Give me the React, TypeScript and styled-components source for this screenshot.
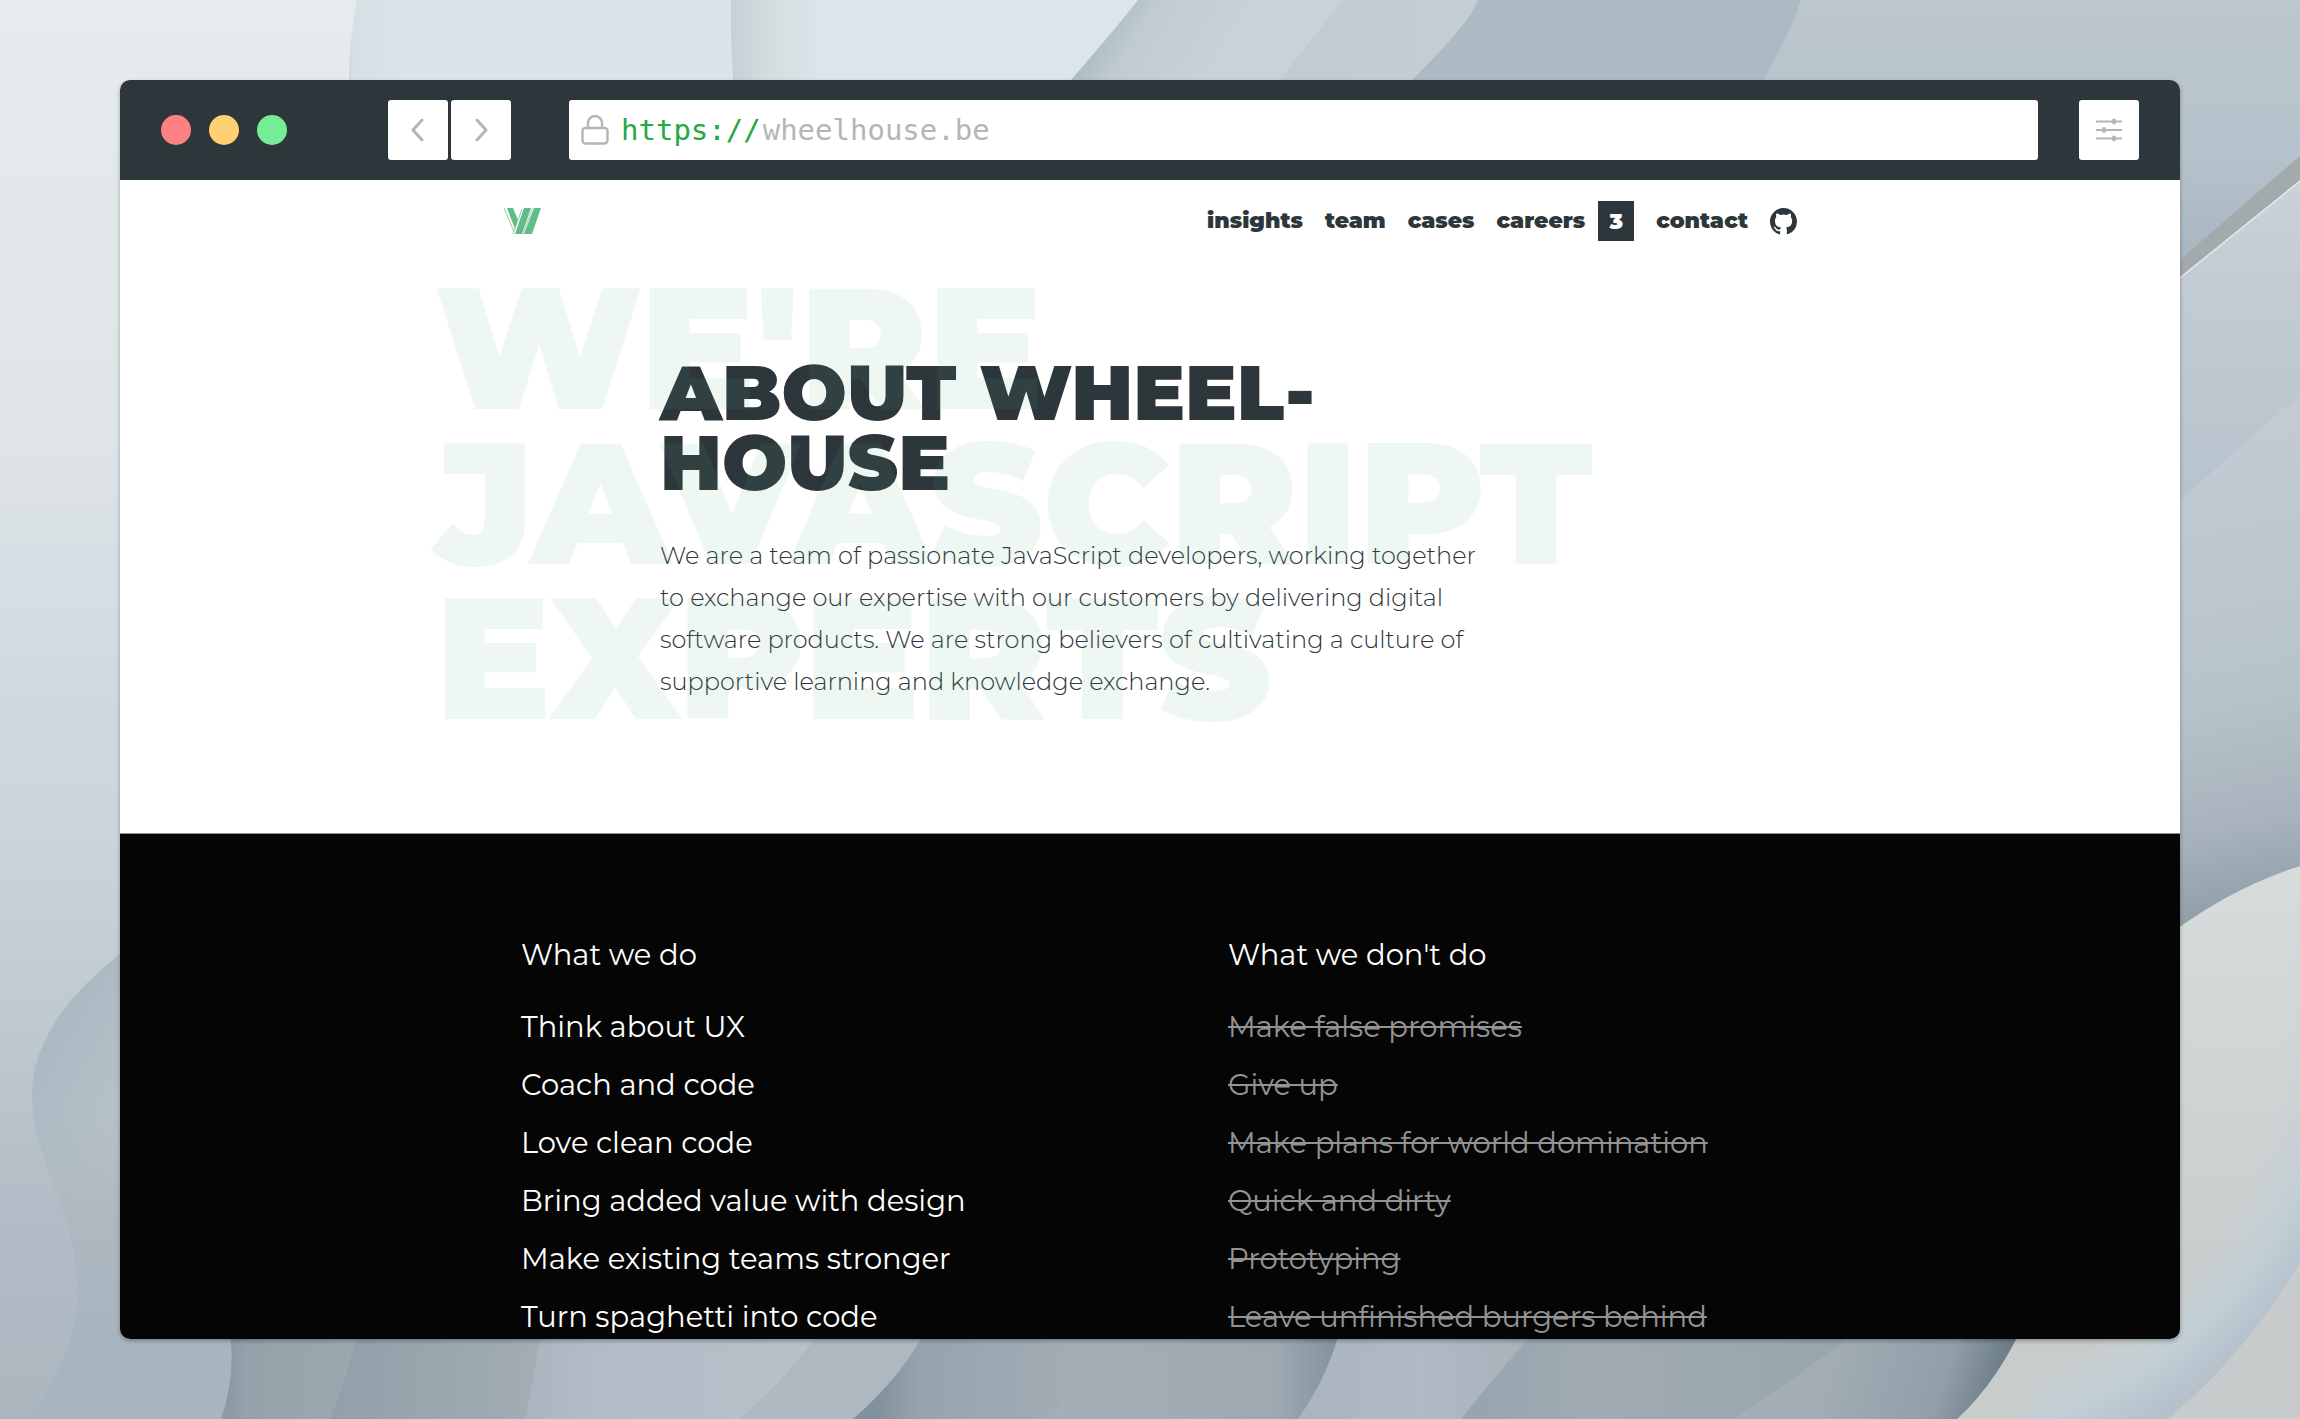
import React from "react";
import styled, { createGlobalStyle } from "styled-components";

const ink = "#2d363b";
const green = "#58ac7b";
const muted = "#b5b5b5";

const GlobalStyle = createGlobalStyle`
  *, *::before, *::after { box-sizing: border-box; }
  body { margin: 0; font-family: Montserrat, Inter, "Open Sans", sans-serif; color: ${ink}; }
  h1, h2, p, ul { margin: 0; padding: 0; font-weight: inherit; }
  ul { list-style: none; }
`;

const Desktop = styled.div`
  position: relative;
  display: flex;
  height: 100vh;
  padding: 80px 120px;
  overflow: hidden;
`;

const Wallpaper = styled.svg`
  position: absolute;
  inset: 0;
  width: 100%;
  height: 100%;
`;

const BrowserWindow = styled.div`
  position: relative;
  flex: 1;
  display: flex;
  flex-direction: column;
  min-width: 0;
  overflow: hidden;
  border-radius: 10px;
  background: #fff;
  box-shadow: 0 2px 4px rgba(0, 0, 0, 0.3);
`;

const Toolbar = styled.div`
  flex: none;
  display: flex;
  align-items: center;
  height: 100px;
  padding: 0 41px;
  background: ${ink};
`;

const Lights = styled.div`
  display: flex;
  gap: 18px;
  margin-right: 101px;
`;

const Light = styled.button<{ $color: string }>`
  width: 30px;
  height: 30px;
  padding: 0;
  border: 0;
  border-radius: 50%;
  background: ${(p) => p.$color};
`;

const History = styled.div`
  display: flex;
  gap: 3px;
  margin-right: 58px;
`;

const ToolButton = styled.button`
  display: grid;
  place-items: center;
  width: 60px;
  height: 60px;
  padding: 0;
  border: 0;
  border-radius: 3px;
  background: #fff;
  color: ${muted};
`;

const AddressBar = styled.label`
  flex: 1;
  display: flex;
  align-items: center;
  min-width: 0;
  height: 60px;
  margin-right: 41px;
  padding: 0 12px;
  border-radius: 3px;
  background: #fff;
  color: ${muted};
  font: 29px/60px "DejaVu Sans Mono", monospace;
`;

const Scheme = styled.span`
  margin-left: 12px;
  color: #28a745;
`;

const AddressInput = styled.input`
  flex: 1;
  min-width: 0;
  padding: 0 2px;
  border: 0;
  outline: 0;
  background: none;
  color: inherit;
  font: inherit;
`;

const Page = styled.div`
  flex: 1;
  display: flex;
  flex-direction: column;
  min-height: 0;
  overflow: hidden;
`;

const SiteHeader = styled.header`
  flex: none;
  display: flex;
  align-items: center;
  justify-content: space-between;
  width: 100%;
  max-width: 1300px;
  height: 82px;
  margin: 0 auto;
  padding: 0 3px;
`;

const HomeLink = styled.a`
  display: flex;
`;

const SiteNav = styled.nav`
  display: flex;
  align-items: center;
  gap: 22px;
`;

const NavLink = styled.a`
  display: flex;
  align-items: center;
  gap: 13px;
  color: ${ink};
  font-size: 22px;
  font-weight: 900;
  line-height: 40px;
  text-decoration: none;
`;

const Badge = styled.span`
  width: 36px;
  padding-top: 2px;
  background: ${ink};
  color: #fff;
  line-height: 38px;
  text-align: center;
`;

const Hero = styled.section`
  flex: none;
  display: grid;
  width: 100%;
  max-width: 1430px;
  height: 571px;
  margin: 0 auto;
`;

const Intro = styled.div`
  grid-area: 1 / 1;
  max-width: 1060px;
  padding: 95px 0 0 225px;
`;

const Title = styled.h1`
  font-size: 77px;
  font-weight: 900;
  line-height: 70px;
  text-transform: uppercase;
`;

const Lead = styled.p`
  margin-top: 38px;
  font-size: 24px;
  font-weight: 300;
  line-height: 42px;
`;

const Ghost = styled.p`
  grid-area: 1 / 1;
  z-index: 1;
  padding: 8px 0 0;
  color: ${green};
  font-size: 172px;
  font-weight: 900;
  line-height: 155px;
  text-transform: uppercase;
  opacity: 0.09;
  pointer-events: none;
`;

const Values = styled.section`
  flex: 1 0 auto;
  border-top: 1px solid #8e8e8e;
  background: #050505;
  color: #fff;
`;

const ValuesInner = styled.div`
  display: grid;
  grid-template-columns: 1fr 1fr;
  column-gap: 156px;
  max-width: 1258px;
  margin: 0 auto;
  padding-top: 92px;
`;

const ColumnTitle = styled.h2`
  margin-bottom: 14px;
  font-size: 29px;
  line-height: 58px;
`;

const Item = styled.li<{ $struck?: boolean }>`
  color: ${(p) => (p.$struck ? "#939393" : "#fff")};
  font-size: 29px;
  line-height: 58px;
  text-decoration: ${(p) => (p.$struck ? "line-through" : "none")};
`;

const doList = [
  "Think about UX",
  "Coach and code",
  "Love clean code",
  "Bring added value with design",
  "Make existing teams stronger",
  "Turn spaghetti into code",
];

const dontList = [
  "Make false promises",
  "Give up",
  "Make plans for world domination",
  "Quick and dirty",
  "Prototyping",
  "Leave unfinished burgers behind",
];

type Stop = [number, string];

function Gradient({ id, x1 = 0, y1 = 0, x2 = 0, y2 = 0, stops }: {
  id: string; x1?: number; y1?: number; x2?: number; y2?: number; stops: Stop[];
}) {
  return (
    <linearGradient id={id} gradientUnits="userSpaceOnUse" x1={x1} y1={y1} x2={x2} y2={y2}>
      {stops.map(([at, color]) => <stop key={at} offset={at} stopColor={color} />)}
    </linearGradient>
  );
}

function WallpaperArt() {
  return (
    <Wallpaper viewBox="0 0 2300 1419" preserveAspectRatio="none" aria-hidden="true">
      <defs>
        <Gradient id="base" y2={1419} stops={[[0, "#e6ebed"], [0.3, "#dfe5e8"], [0.5, "#d0d8df"], [0.58, "#ccd5dc"], [0.74, "#bcc7ce"], [0.86, "#b2bcc6"], [1, "#abb6bf"]]} />
        <Gradient id="t1" x1={348} x2={400} stops={[[0, "#c9d3d9"], [0.1, "#d6dfe4"], [1, "#dce4eb"]]} />
        <Gradient id="t2" x1={731} x2={820} stops={[[0, "#c6d0d7"], [0.5, "#d6dee0"], [1, "#dce4ec"]]} />
        <Gradient id="t3" x1={1092} y1={30} x2={1200} y2={95} stops={[[0, "#a9b8c2"], [0.35, "#c1ccd2"], [1, "#c9d1d9"]]} />
        <Gradient id="t4" x1={1300} x2={1480} stops={[[0, "#c0cbd4"], [1, "#c4ced2"]]} />
        <Gradient id="t5" x1={1400} x2={1800} stops={[[0, "#acbac3"], [1, "#abbac4"]]} />
        <Gradient id="t6" y2={250} stops={[[0, "#bbc6cd"], [0.6, "#b7c3cc"], [1, "#a8b7c2"]]} />
        <Gradient id="r1" y1={200} y2={490} stops={[[0, "#c8d0d8"], [0.5, "#bfc9d1"], [1, "#b7c3cd"]]} />
        <Gradient id="r2" x1={2200} y1={430} x2={2300} y2={910} stops={[[0, "#c2cbd3"], [0.55, "#b7c3ca"], [0.8, "#a8b3bd"], [1, "#8f9da6"]]} />
        <Gradient id="cream" y1={880} y2={1300} stops={[[0, "#d6dbdc"], [0.6, "#ced2d2"], [1, "#c8cccb"]]} />
        <radialGradient id="fold" gradientUnits="userSpaceOnUse" cx="1900" cy="1000" r="490">
          <stop offset="0.8" stopColor="#c5d1d6" stopOpacity="0" />
          <stop offset="0.9" stopColor="#c3cfd6" />
          <stop offset="1" stopColor="#b4c0ca" />
        </radialGradient>
        <Gradient id="wave" x1={35} y1={1050} x2={140} y2={1110} stops={[[0, "#acb8c2"], [0.5, "#b1bec6"], [1, "#b9c3ca"]]} />
        <Gradient id="waveLow" y1={1100} y2={1340} stops={[[0, "rgba(172,183,192,0)"], [0.5, "#adb8c1"], [1, "#a9b5be"]]} />
        <Gradient id="b1" x1={228} x2={350} stops={[[0, "#8b99a4"], [0.15, "#94a2aa"], [1, "#9ca8b0"]]} />
        <Gradient id="b2" x1={335} x2={540} stops={[[0, "#93a0a9"], [1, "#a2adb4"]]} />
        <Gradient id="b3" x1={530} x2={820} stops={[[0, "#aab5bf"], [0.2, "#b2bcc7"], [1, "#b8c1c9"]]} />
        <Gradient id="b5" x1={880} x2={1080} stops={[[0, "#82929c"], [0.2, "#98a4ad"], [1, "#a2adb6"]]} />
        <Gradient id="b6" x1={1060} x2={1330} stops={[[0, "#a4aeb7"], [0.8, "#9ea9b1"], [1, "#86959f"]]} />
        <Gradient id="b7" x1={1310} x2={1530} stops={[[0, "#aab5bf"], [0.5, "#b0bac4"], [1, "#a7b2bb"]]} />
        <Gradient id="b8" x1={1480} x2={1830} stops={[[0, "#98a5ae"], [0.3, "#a0abb3"], [1, "#9aa6ae"]]} />
        <Gradient id="b9" x1={1830} y1={1350} x2={1990} y2={1400} stops={[[0, "#a2adb5"], [0.7, "#929fa8"], [1, "#6e7f8a"]]} />
      </defs>
      <rect width="2300" height="1419" fill="url(#base)" />
      <path d="M357 0Q347 50 349 120H2300V0Z" fill="url(#t1)" />
      <path d="M731 0Q730 50 736 120H2300V0Z" fill="url(#t2)" />
      <path d="M1138 0Q1105 42 1036 120H2300V0Z" fill="url(#t3)" />
      <path d="M1343 0Q1310 40 1250 120H2300V0Z" fill="url(#t4)" />
      <path d="M1478 0Q1467 30 1380 110H2300V0Z" fill="url(#t5)" />
      <path d="M1801 0Q1788 42 1745 110V300H2300V0Z" fill="url(#t6)" />
      <path d="M2160 277L2300 156V190L2160 300Z" fill="#a2aaab" />
      <path d="M2160 294L2300 181V500H2160Z" fill="url(#r1)" />
      <path d="M2160 294L2300 181" stroke="#e4eaed" strokeWidth="1.5" />
      <path d="M2160 518L2300 394V1000H2160Z" fill="url(#r2)" />
      <path d="M130 946C62 997 32 1047 32 1095C32 1160 77 1210 77 1294C77 1345 52 1390 25 1419H260V946Z" fill="url(#wave)" />
      <path d="M130 946C62 997 32 1047 32 1095C32 1160 77 1210 77 1294C77 1345 52 1390 25 1419H260V946Z" fill="url(#waveLow)" />
      <path d="M228 1320Q238 1370 221 1419H2300V1320Z" fill="url(#b1)" />
      <path d="M360 1320Q350 1370 330 1419H2300V1320Z" fill="url(#b2)" />
      <path d="M542 1320Q536 1370 525 1419H2300V1320Z" fill="url(#b3)" />
      <path d="M828 1320Q795 1370 740 1419H2300V1320Z" fill="#adb8c1" />
      <path d="M930 1320Q909 1370 853 1419H2300V1320Z" fill="url(#b5)" />
      <path d="M1096 1320Q1074 1370 1052 1419H2300V1320Z" fill="url(#b6)" />
      <path d="M1342 1320Q1332 1370 1298 1419H2300V1320Z" fill="url(#b7)" />
      <path d="M1545 1320Q1500 1370 1461 1419H2300V1320Z" fill="url(#b8)" />
      <path d="M1870 1320Q1810 1370 1732 1419H2300V1320Z" fill="url(#b9)" />
      <path d="M1957 1419Q2000 1380 2030 1310L2160 1000V942Q2225 890 2300 866V1419Z" fill="url(#cream)" />
      <path d="M2300 940L2100 1200L2020 1419H2168Q2250 1350 2300 1262Z" fill="url(#fold)" />
      <path d="M2168 1419Q2250 1350 2300 1262V1419Z" fill="#c8cbcb" />
    </Wallpaper>
  );
}

const LogoMark = () => (
  <svg width="39" height="28" viewBox="0 0 39 28" aria-hidden="true">
    <path d="M4 1H10L15 13L12 22Z" fill="#5fbd87" />
    <path d="M21 1H28L19 27H12ZM31 1H38L29 27H21Z" fill="#5fbd87" />
    <path d="M1 1L11 25M19 2L10 27M29.500 1L20 27" stroke="#9fc2b2" strokeWidth="1" fill="none" />
  </svg>
);

const Chevron = ({ d }: { d: string }) => (
  <svg width="24" height="24" viewBox="0 0 24 24" fill="none" stroke="currentColor" strokeWidth="3" strokeLinecap="round" strokeLinejoin="round" aria-hidden="true">
    <path d={d} />
  </svg>
);

const LockIcon = () => (
  <svg width="28" height="30" viewBox="0 0 28 30" fill="none" stroke="currentColor" strokeWidth="2.4" aria-hidden="true">
    <rect x="1.5" y="13" width="25" height="15.5" rx="3" />
    <path d="M7 13V8a7 7 0 0 1 14 0V13" />
  </svg>
);

const SlidersIcon = () => (
  <svg width="26" height="24" viewBox="0 0 26 24" fill="none" stroke="currentColor" strokeWidth="2" aria-hidden="true">
    <path d="M0 3.500H26M0 12H26M0 20.500H26" />
    <path d="M18 2.500V4.500M8 11V13M18 19.500V21.500" strokeWidth="4" strokeLinecap="round" />
  </svg>
);

const GithubIcon = () => (
  <svg width="27" height="27" viewBox="0 0 16 16" fill="currentColor" aria-hidden="true">
    <path d="M8 0C3.58 0 0 3.58 0 8c0 3.54 2.29 6.53 5.47 7.59.4.07.55-.17.55-.38 0-.19-.01-.82-.01-1.49-2.01.37-2.53-.49-2.69-.94-.09-.23-.48-.94-.82-1.13-.28-.15-.68-.52-.01-.53.63-.01 1.08.58 1.23.82.72 1.21 1.87.87 2.33.66.07-.52.28-.87.51-1.07-1.78-.2-3.64-.89-3.64-3.95 0-.87.31-1.59.82-2.15-.08-.2-.36-1.02.08-2.12 0 0 .67-.21 2.2.82a7.6 7.6 0 0 1 4 0c1.53-1.04 2.2-.82 2.2-.82.44 1.1.16 1.92.08 2.12.51.56.82 1.27.82 2.15 0 3.07-1.87 3.75-3.65 3.95.29.25.54.73.54 1.48 0 1.07-.01 1.93-.01 2.2 0 .21.15.46.55.38A8.01 8.01 0 0 0 16 8c0-4.42-3.58-8-8-8Z" />
  </svg>
);

export default function App() {
  return (
    <>
      <GlobalStyle />
      <Desktop>
        <WallpaperArt />
        <BrowserWindow>
          <Toolbar>
            <Lights>
              <Light $color="#ff8080" aria-label="Close" />
              <Light $color="#ffcf70" aria-label="Minimise" />
              <Light $color="#74ee94" aria-label="Maximise" />
            </Lights>
            <History>
              <ToolButton aria-label="Back"><Chevron d="M16 2L7 12L16 22" /></ToolButton>
              <ToolButton aria-label="Forward"><Chevron d="M8 2L17 12L8 22" /></ToolButton>
            </History>
            <AddressBar>
              <LockIcon />
              <Scheme>https://</Scheme>
              <AddressInput type="text" aria-label="Address" defaultValue="wheelhouse.be" spellCheck={false} />
            </AddressBar>
            <ToolButton aria-label="Settings"><SlidersIcon /></ToolButton>
          </Toolbar>
          <Page>
            <SiteHeader>
              <HomeLink href="#home" aria-label="Home"><LogoMark /></HomeLink>
              <SiteNav>
                <NavLink href="#insights">insights</NavLink>
                <NavLink href="#team">team</NavLink>
                <NavLink href="#cases">cases</NavLink>
                <NavLink href="#careers">careers <Badge>3</Badge></NavLink>
                <NavLink href="#contact">contact</NavLink>
                <NavLink href="#github" aria-label="GitHub"><GithubIcon /></NavLink>
              </SiteNav>
            </SiteHeader>
            <Hero>
              <Intro>
                <Title>About Wheel-<br />house</Title>
                <Lead>
                  We are a team of passionate JavaScript developers, working together to exchange our
                  expertise with our customers by delivering digital software products. We are strong
                  believers of cultivating a culture of supportive learning and knowledge exchange.
                </Lead>
              </Intro>
              <Ghost>We're<br />JavaScript<br />experts</Ghost>
            </Hero>
            <Values>
              <ValuesInner>
                <div>
                  <ColumnTitle>What we do</ColumnTitle>
                  <ul>{doList.map((text) => <Item key={text}>{text}</Item>)}</ul>
                </div>
                <div>
                  <ColumnTitle>What we don't do</ColumnTitle>
                  <ul>{dontList.map((text) => <Item key={text} $struck>{text}</Item>)}</ul>
                </div>
              </ValuesInner>
            </Values>
          </Page>
        </BrowserWindow>
      </Desktop>
    </>
  );
}
